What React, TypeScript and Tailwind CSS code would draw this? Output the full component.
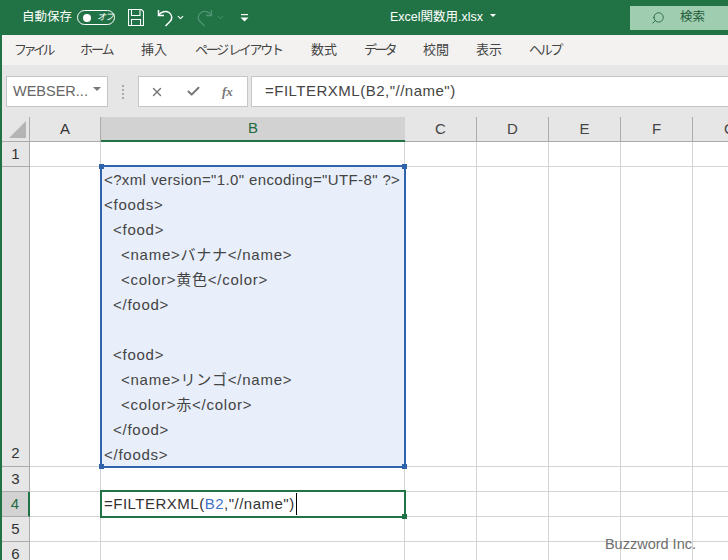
import { Check, ChevronDown, Search, X } from "lucide-react";

const latin = "font-['Liberation_Sans','Noto_Sans_CJK_JP',sans-serif]";

const tabs = [
  { label: "ファイル", w: "w-[66px]", track: "tracking-[-3.5px]" },
  { label: "ホーム", w: "w-[61px]", track: "tracking-[-2px]" },
  { label: "挿入", w: "w-[54px]", track: "tracking-normal" },
  { label: "ページ レイアウト", w: "w-[116px]", track: "tracking-[-2.3px]" },
  { label: "数式", w: "w-[53px]", track: "tracking-normal" },
  { label: "データ", w: "w-[59px]", track: "tracking-[-2.7px]" },
  { label: "校閲", w: "w-[53px]", track: "tracking-normal" },
  { label: "表示", w: "w-[53px]", track: "tracking-normal" },
  { label: "ヘルプ", w: "w-[60px]", track: "tracking-[-2.3px]" },
];

const xmlLines = [
  { text: '<?xml version="1.0" encoding="UTF-8" ?>', pad: "pl-0 tracking-[0.38px]" },
  { text: "<foods>", pad: "pl-0" },
  { text: "<food>", pad: "pl-[9px]" },
  { text: "<name>バナナ</name>", pad: "pl-[17px]" },
  { text: "<color>黄色</color>", pad: "pl-[17px]" },
  { text: "</food>", pad: "pl-[9px]" },
  { text: "\u00a0", pad: "pl-0" },
  { text: "<food>", pad: "pl-[9px]" },
  { text: "<name>リンゴ</name>", pad: "pl-[17px]" },
  { text: "<color>赤</color>", pad: "pl-[17px]" },
  { text: "</food>", pad: "pl-[9px]" },
  { text: "</foods>", pad: "pl-0" },
];

const cols = ["C", "D", "E", "F"];
const cellLine = "border-r border-b border-[#d4d4d4]";

const Handle = ({ className }: { className: string }) => (
  <span className={`absolute h-[5px] w-[5px] bg-[#2f64ad] ${className}`} />
);

const RowHead = ({ n, active }: { n: number; active?: boolean }) => (
  <div
    className={`flex h-[25px] items-center justify-center border-b text-[15px] ${
      active
        ? "border-r-2 border-b-[#ababab] border-r-[#217346] bg-[#d2d2d2] text-[#1f6b43]"
        : "border-r border-b-[#ababab] border-r-[#ababab] bg-[#e6e6e6] text-[#333]"
    }`}
  >
    {n}
  </div>
);

const EmptyRow = () => (
  <>
    <div className={`h-[25px] ${cellLine}`} />
    <div className={`h-[25px] ${cellLine}`} />
    {cols.map((c) => (
      <div key={c} className={`h-[25px] ${cellLine}`} />
    ))}
    <div className="h-[25px] border-b border-[#d4d4d4]" />
  </>
);

const App = () => {
  return (
    <div className={`flex h-[560px] w-[728px] flex-col overflow-hidden bg-white ${latin}`}>
      {/* title bar */}
      <div className="flex h-[35px] shrink-0 items-center bg-[#217346] pl-[22px] text-white">
        <span className="w-[55px] text-[12.5px]">自動保存</span>
        <div className="flex h-[15px] w-[38px] items-center rounded-full border border-white pl-[5px]">
          <span className="h-[8px] w-[8px] shrink-0 rounded-full bg-white" />
          <span className="ml-[6px] whitespace-nowrap text-[9px] italic leading-none tracking-[-1px]">オフ</span>
        </div>
        <svg className="ml-[13px] h-[17px] w-[16px]" viewBox="0 0 16 17" fill="none" stroke="white" strokeWidth="1.1">
          <path d="M.5 .5h13l2 2v14h-15z" />
          <path d="M3.500 .5v6h8.500v-6M3.500 16.500v-6h9v6" />
        </svg>
        <svg className="ml-[13px] h-[18px] w-[16px]" viewBox="0 0 16 18" fill="none" stroke="white" strokeWidth="1.5">
          <path d="M1.500 1v5.500h5.500M2 6C4 2.500 9 1.500 12 3.500c3.500 2.500 3.500 6.500 1 9l-4.500 4.500" />
        </svg>
        <ChevronDown className="ml-[3px] h-[9px] w-[9px] text-white" strokeWidth={3} />
        <svg className="ml-[12px] h-[18px] w-[16px]" viewBox="0 0 16 18" fill="none" stroke="#4f9573" strokeWidth="1.3">
          <path d="M14.500 1v5.500h-5.500M14 6C12 2.500 7 1.500 4 3.500c-3.500 2.500-3.500 6.500-1 9l4.500 4.500" />
        </svg>
        <ChevronDown className="ml-[3px] h-[9px] w-[9px] text-[#4f9573]" strokeWidth={2.500} />
        <svg className="ml-[15px] h-[10px] w-[9px]" viewBox="0 0 9 10" fill="white">
          <rect x="1" y="1" width="7" height="1.200" />
          <path d="M.5 4.500h8l-4 4z" />
        </svg>
        <span className="ml-[141px] w-[240px] shrink-0 text-[12.5px]">
          Excel関数用.xlsx
          <span className="ml-[7px] inline-block translate-y-[-2px] border-x-[3px] border-t-[3px] border-x-transparent border-t-white align-middle" />
        </span>
        <div className="flex h-[24px] flex-1 items-center bg-[#9fcdb0] pl-[21px] text-[#1f5c3a]">
          <Search className="h-[14px] w-[14px] -scale-x-100" strokeWidth={1.4} />
          <span className="ml-[15px] whitespace-nowrap text-[12.5px]">検索</span>
        </div>
      </div>

      {/* ribbon tabs */}
      <div className="flex h-[30px] shrink-0 items-center border-l-2 border-[#217346] bg-[#f3f2f1] pl-[12px] text-[13px] text-[#444]">
        {tabs.map((t) => (
          <span key={t.label} className={`${t.w} ${t.track} whitespace-nowrap`}>
            {t.label}
          </span>
        ))}
      </div>

      {/* formula bar */}
      <div className="flex h-[52px] shrink-0 items-center border-l-2 border-[#217346] bg-[#e6e6e6] pl-[4px] pt-[1px]">
        <div className="flex h-[31px] w-[102px] items-center justify-between border border-[#c6c6c6] bg-white px-[6px] text-[14.5px] text-[#666]">
          WEBSER...
          <span className="-translate-y-[3px] border-x-[4px] border-t-[4px] border-x-transparent border-t-[#777]" />
        </div>
        <div className="flex w-[30px] flex-col items-center gap-[2px]">
          <span className="h-[2px] w-[2px] bg-[#aaa]" />
          <span className="h-[2px] w-[2px] bg-[#aaa]" />
          <span className="h-[2px] w-[2px] bg-[#aaa]" />
          <span className="h-[2px] w-[2px] bg-[#aaa]" />
        </div>
        <div className="flex h-[31px] w-[110px] items-center border border-[#c6c6c6] bg-white pl-[11px] text-[#777]">
          <X className="h-[14px] w-[14px]" strokeWidth={2.4} />
          <Check className="ml-[22px] h-[15px] w-[15px]" strokeWidth={3.2} />
          <span className="ml-[21px] font-['Liberation_Serif',serif] text-[13px] font-bold italic leading-none">fx</span>
        </div>
        <div className="ml-[3px] flex h-[31px] flex-1 items-center border-y border-l border-[#c6c6c6] bg-white pl-[13px] text-[15px] tracking-[0.5px] text-[#444]">
          =FILTERXML(B2,"//name")
        </div>
      </div>

      {/* sheet */}
      <div className="relative grid flex-1 grid-cols-[28px_71px_304px_72px_72px_72px_72px_1fr] grid-rows-[25px_25px_300px_25px_25px_25px_1fr] border-l-2 border-[#217346]">
        {/* column headers */}
        <div className="flex items-end justify-end border-r border-b border-r-[#ababab] border-b-[#ababab] bg-[#e6e6e6] pb-[3px] pr-[3px]">
          <span className="border-b-[17px] border-l-[17px] border-b-[#b4b4b4] border-l-transparent" />
        </div>
        <div className="flex items-center justify-center border-r border-b border-[#ababab] bg-[#e6e6e6] text-[15px] text-[#333]">A</div>
        <div className="flex items-center justify-center border-b-2 border-[#217346] bg-[#d2d2d2] text-[15px] text-[#1f6b43]">B</div>
        {cols.map((c) => (
          <div key={c} className="flex items-center justify-center border-r border-b border-[#ababab] bg-[#e6e6e6] text-[15px] text-[#444]">
            {c}
          </div>
        ))}
        <div className="flex items-center border-b border-[#ababab] bg-[#e6e6e6] pl-[31px] text-[15px] text-[#444]">G</div>

        {/* row 1 */}
        <RowHead n={1} />
        <EmptyRow />

        {/* row 2 */}
        <div className="flex items-end justify-center border-r border-b border-[#ababab] bg-[#e6e6e6] pb-[2px] text-[15px] text-[#333]">2</div>
        <div className={cellLine} />
        <div className="relative z-10 -ml-px -mt-[2px] flex h-[303px] w-[306px] flex-col border-2 border-[#2f64ad] bg-[#e8effa] pl-[2px] text-[15px] leading-[25px] tracking-[0.75px] text-[#444]">
          {xmlLines.map((l, i) => (
            <div key={i} className={`h-[25px] shrink-0 whitespace-nowrap ${l.pad}`}>
              {l.text}
            </div>
          ))}
          <Handle className="-left-[3px] -top-[3px]" />
          <Handle className="-right-[3px] -top-[3px]" />
          <Handle className="-bottom-[3px] -left-[3px]" />
          <Handle className="-bottom-[3px] -right-[3px]" />
        </div>
        {cols.map((c) => (
          <div key={c} className={cellLine} />
        ))}
        <div className="border-b border-[#d4d4d4]" />

        {/* row 3 */}
        <RowHead n={3} />
        <EmptyRow />

        {/* row 4 */}
        <RowHead n={4} active />
        <div className={`h-[25px] ${cellLine}`} />
        <div className="relative z-10 -ml-px -mt-[2px] flex h-[28px] w-[306px] items-center border-2 border-[#217346] bg-white pl-[2px] text-[15px] tracking-[0.5px] text-[#333]">
          =FILTERXML(<span className="text-[#4472c4]">B2</span>,"//name")
          <span className="ml-px h-[22px] w-px bg-black" />
          <span className="absolute -bottom-[3px] -right-[3px] h-[5px] w-[5px] bg-[#217346]" />
        </div>
        {cols.map((c) => (
          <div key={c} className={`h-[25px] ${cellLine}`} />
        ))}
        <div className="h-[25px] border-b border-[#d4d4d4]" />

        {/* rows 5, 6 */}
        <RowHead n={5} />
        <EmptyRow />
        <RowHead n={6} />
        <EmptyRow />

        {/* watermark */}
        <span className="absolute bottom-[11px] right-[32px] z-20 text-[14.5px] text-[#6e6e6e]">Buzzword Inc.</span>
      </div>
    </div>
  );
};

export default App;
